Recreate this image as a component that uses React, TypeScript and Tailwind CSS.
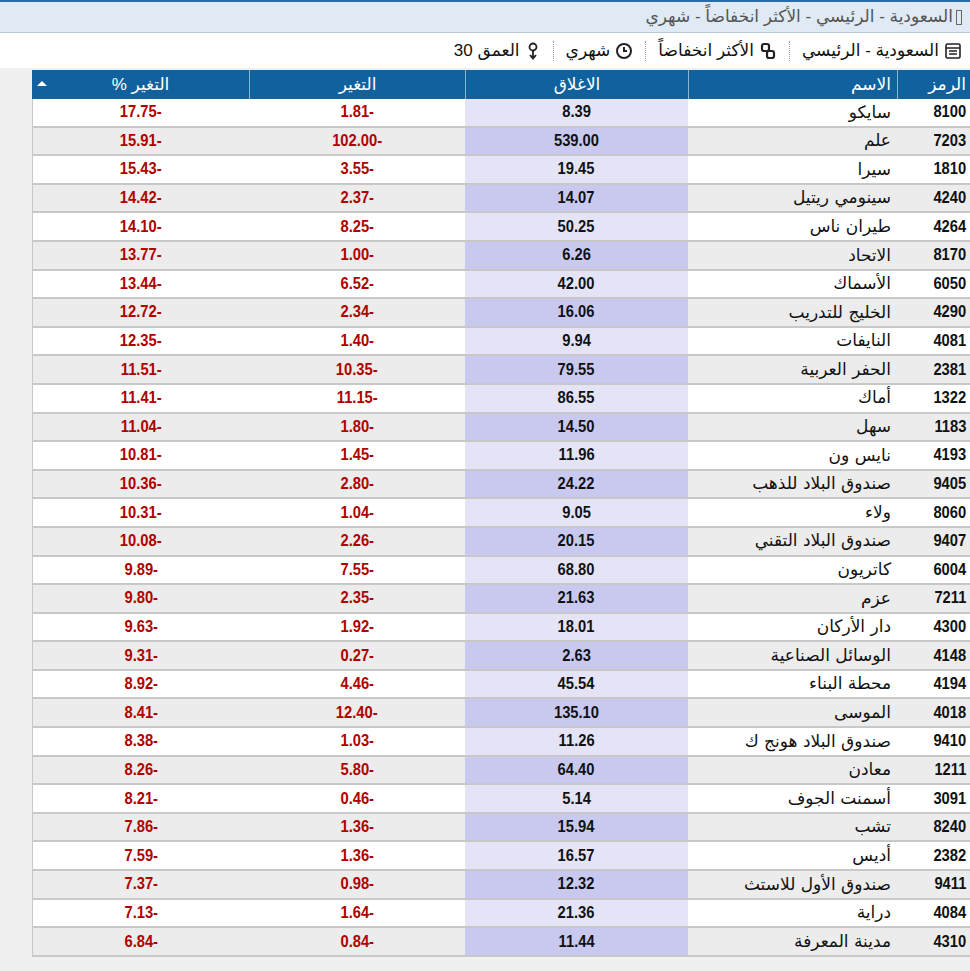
const rows: [string,string,string,string,string][] = [
["8100","سايكو","8.39","1.81-","17.75-"],
["7203","علم","539.00","102.00-","15.91-"],
["1810","سيرا","19.45","3.55-","15.43-"],
["4240","سينومي ريتيل","14.07","2.37-","14.42-"],
["4264","طيران ناس","50.25","8.25-","14.10-"],
["8170","الاتحاد","6.26","1.00-","13.77-"],
["6050","الأسماك","42.00","6.52-","13.44-"],
["4290","الخليج للتدريب","16.06","2.34-","12.72-"],
["4081","النايفات","9.94","1.40-","12.35-"],
["2381","الحفر العربية","79.55","10.35-","11.51-"],
["1322","أماك","86.55","11.15-","11.41-"],
["1183","سهل","14.50","1.80-","11.04-"],
["4193","نايس ون","11.96","1.45-","10.81-"],
["9405","صندوق البلاد للذهب","24.22","2.80-","10.36-"],
["8060","ولاء","9.05","1.04-","10.31-"],
["9407","صندوق البلاد التقني","20.15","2.26-","10.08-"],
["6004","كاتريون","68.80","7.55-","9.89-"],
["7211","عزم","21.63","2.35-","9.80-"],
["4300","دار الأركان","18.01","1.92-","9.63-"],
["4148","الوسائل الصناعية","2.63","0.27-","9.31-"],
["4194","محطة البناء","45.54","4.46-","8.92-"],
["4018","الموسى","135.10","12.40-","8.41-"],
["9410","صندوق البلاد هونج ك","11.26","1.03-","8.38-"],
["1211","معادن","64.40","5.80-","8.26-"],
["3091","أسمنت الجوف","5.14","0.46-","8.21-"],
["8240","تشب","15.94","1.36-","7.86-"],
["2382","أديس","16.57","1.36-","7.59-"],
["9411","صندوق الأول للاستث","12.32","0.98-","7.37-"],
["4084","دراية","21.36","1.64-","7.13-"],
["4310","مدينة المعرفة","11.44","0.84-","6.84-"],
];
const F = { fontFamily: '"Liberation Sans", "DejaVu Sans", sans-serif' };
const N = ({ v }: { v: string }) => <span dir="ltr" className="inline-block scale-x-[0.92]">{v}</span>;
export default function App() {
  return (
    <div dir="rtl" className="w-[970px] h-[971px] bg-[#f0f0f0] overflow-hidden text-[#111]" style={F}>
      <div className="h-[33px] bg-[#dfeaf4] border-t-2 border-[#2a6aa8] border-b border-b-[#b8c8d8] flex items-center pr-[8px] text-[17px] text-[#555]">
        <span className="inline-block w-[6px] h-[15px] border border-[#666] ml-[3px]"></span>
        السعودية - الرئيسي - الأكثر انخفاضاً - شهري
      </div>
      <div className="h-[35px] bg-white flex items-center pr-[8px] text-[17px] gap-[12px]">
        <span className="flex items-center gap-[5px]"><svg width="18" height="18" viewBox="0 0 18 18" fill="none" stroke="#222" strokeWidth="1.6"><rect x="2" y="2" width="14" height="14" rx="1.5"/><path d="M2 6h14M5 9h8M5 12h8"/></svg>السعودية - الرئيسي</span>
        <span className="border-r border-dotted border-[#999] h-[20px]"></span>
        <span className="flex items-center gap-[5px]"><svg width="18" height="18" viewBox="0 0 18 18" fill="none" stroke="#222" strokeWidth="2.2"><rect x="3" y="2" width="7" height="7" rx="2"/><rect x="8" y="9" width="7" height="7" rx="2"/></svg>الأكثر انخفاضاً</span>
        <span className="border-r border-dotted border-[#999] h-[20px]"></span>
        <span className="flex items-center gap-[5px]"><svg width="18" height="18" viewBox="0 0 18 18" fill="none" stroke="#222" strokeWidth="2"><circle cx="9" cy="9" r="7"/><path d="M9 5v4h3"/></svg>شهري</span>
        <span className="border-r border-dotted border-[#999] h-[20px]"></span>
        <span className="flex items-center gap-[5px]"><svg width="16" height="18" viewBox="0 0 16 18" fill="none" stroke="#222" strokeWidth="1.8"><circle cx="8" cy="5" r="3.5"/><path d="M8 8.5v8M5 13l3 3.5 3-3.5"/></svg>العمق 30</span>
      </div>
      <div className="ml-[32px] mt-[2px]">
        <div className="flex h-[29px] bg-[#10619e] text-white text-[17px]">
          <div className="w-[73px] px-[4px] flex items-center border-l border-[#8fb3d3]">الرمز</div>
          <div className="w-[209px] px-[6px] flex items-center border-l border-[#8fb3d3]">الاسم</div>
          <div className="w-[223px] flex items-center justify-center border-l border-[#8fb3d3]">الاغلاق</div>
          <div className="w-[216px] flex items-center justify-center border-l border-[#8fb3d3]">التغير</div>
          <div className="flex-1 flex items-center justify-center relative">التغير %<span className="absolute left-[5px] top-[11px] w-0 h-0 border-x-[5px] border-x-transparent border-b-[5px] border-b-white"></span></div>
        </div>
        {rows.map((r, i) => {
          const alt = i % 2 === 1;
          return (
            <div key={i} className={`flex h-[28.6px] border-b-2 border-[#c8c8c8] text-[16px] font-bold ${alt ? "bg-[#ececec]" : "bg-white"}`}>
              <div className="w-[73px] px-[2px] flex items-center"><N v={r[0]} /></div>
              <div className="w-[209px] px-[6px] flex items-center font-normal text-[17px]" style={{ fontFamily: '"DejaVu Sans", "Noto Sans", sans-serif' }}>{r[1]}</div>
              <div className={`w-[223px] flex items-center justify-center ${alt ? "bg-[#c9c9f0]" : "bg-[#e4e4f6]"}`}><N v={r[2]} /></div>
              <div className="w-[216px] flex items-center justify-center text-[#b00000]"><N v={r[3]} /></div>
              <div className="flex-1 flex items-center justify-center text-[#b00000] border-l border-[#c8c8c8]"><N v={r[4]} /></div>
            </div>
          );
        })}
      </div>
    </div>
  );
}
